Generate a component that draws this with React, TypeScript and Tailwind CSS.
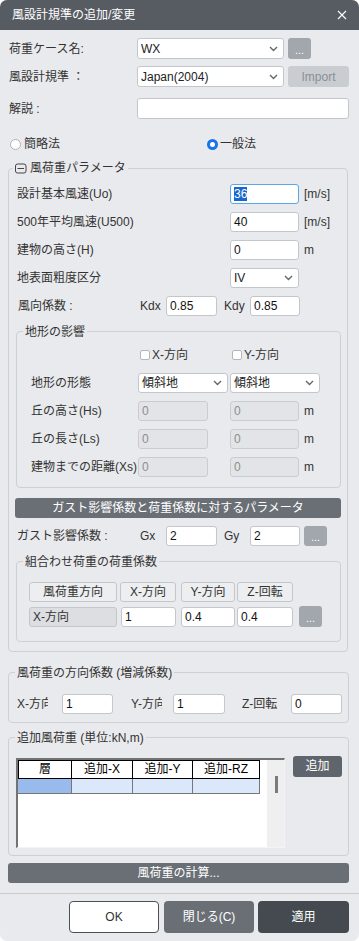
import React from "react";

const Chevron = () => (
  <svg width="9" height="6" viewBox="0 0 9 6" className="shrink-0">
    <polyline points="1,1 4.5,4.5 8,1" fill="none" stroke="#666" strokeWidth="1.4" />
  </svg>
);

function Select({ cls, text }: { cls: string; text: string }) {
  return (
    <div
      className={`flex h-full items-center justify-between rounded-[3px] border border-[#c3c6cb] bg-white pl-[3px] pr-[5px] text-[#222] ${cls}`}
    >
      <span>{text}</span>
      <Chevron />
    </div>
  );
}

function Field({ cls, value, disabled }: { cls: string; value: string; disabled?: boolean }) {
  return (
    <div
      className={`flex h-[20px] items-center rounded-[3px] border pl-[3px] ${
        disabled ? "border-[#c9ccd0] bg-[#e2e4e7] text-[#8d8d8d]" : "border-[#c3c6cb] bg-white text-[#111]"
      } ${cls}`}
    >
      {value}
    </div>
  );
}

function Dots({ cls }: { cls: string }) {
  return (
    <div className={`flex items-end justify-center rounded-[3px] bg-[#a2a7ad] pb-[3px] text-[11px] leading-[11px] text-white ${cls}`}>
      ...
    </div>
  );
}

function Check({ label }: { label: string }) {
  return (
    <div className="flex items-center">
      <div className="h-[10px] w-[10px] rounded-[2px] border border-[#b4b7bb] bg-white" />
      <span className="ml-[2px]">{label}</span>
    </div>
  );
}

const MinusBox = () => (
  <svg width="12" height="11" viewBox="0 0 12 11" className="shrink-0">
    <rect x="0.5" y="1" width="10.5" height="9" rx="2" fill="none" stroke="#444" strokeWidth="1" />
    <line x1="2.5" y1="5.5" x2="9" y2="5.5" stroke="#444" strokeWidth="1" />
  </svg>
);

function HeadBtn({ cls, text }: { cls: string; text: string }) {
  return (
    <div className={`flex h-[20px] items-center justify-center rounded-[3px] border border-[#c3c6cb] bg-[#eceef0] text-[#333] ${cls}`}>
      {text}
    </div>
  );
}

export default function App() {
  return (
    <div className="flex h-[941px] w-[359px] flex-col overflow-hidden rounded-[7px] bg-[#e9eaed] font-['Liberation_Sans','Noto_Sans_CJK_JP',sans-serif] text-[12px] leading-[16px] text-[#333]">
      {/* Title bar */}
      <div className="flex h-[30px] shrink-0 items-center justify-between bg-[#575c63] pl-[12px] pr-[12px] text-white">
        <span>風設計規準の追加/変更</span>
        <svg width="10" height="10" viewBox="0 0 10 10">
          <path d="M1 1L9 9M9 1L1 9" stroke="#fff" strokeWidth="1.1" />
        </svg>
      </div>

      <div className="px-[8px]">
        {/* Row 1 */}
        <div className="mt-[8px] flex h-[21px] items-center">
          <div className="w-[129px] pl-[1px]">荷重ケース名:</div>
          <Select cls="w-[147px]" text="WX" />
          <Dots cls="ml-[4px] h-[21px] w-[23px]" />
        </div>
        {/* Row 2 */}
        <div className="mt-[7px] flex h-[21px] items-center">
          <div className="w-[129px] pl-[1px]">風設計規準 ：</div>
          <Select cls="w-[147px]" text="Japan(2004)" />
          <div className="ml-[4px] flex h-[21px] w-[61px] items-center justify-center rounded-[3px] bg-[#c9cdd2] text-[#8a8f95]">
            Import
          </div>
        </div>
        {/* Row 3 */}
        <div className="mt-[11px] flex h-[21px] items-center">
          <div className="w-[129px] pl-[1px]">解説 :</div>
          <div className="h-[21px] w-[212px] rounded-[3px] border border-[#c3c6cb] bg-white" />
        </div>
        {/* Radios */}
        <div className="mt-[18px] flex h-[14px] items-center pl-[2px]">
          <div className="flex w-[197px] items-center">
            <div className="h-[11px] w-[11px] rounded-full border border-[#b0b3b8] bg-white" />
            <span className="ml-[3px]">簡略法</span>
          </div>
          <div className="flex items-center">
            <div className="h-[11px] w-[11px] rounded-full border-[3px] border-[#1a73e8] bg-white" />
            <span className="ml-[2px]">一般法</span>
          </div>
        </div>

        {/* Outer group */}
        <fieldset className="mt-[9px] w-[340px] rounded-[4px] border border-[#cdd0d4]">
          <legend className="ml-[4px] px-[2px] leading-[16px]">
            <span className="inline-flex items-center">
              <MinusBox />
              <span className="ml-[3px]">風荷重パラメータ</span>
            </span>
          </legend>

          <div className="mt-[6px] flex h-[20px] items-center pl-[8px]">
            <div className="w-[213px]">設計基本風速(Uo)</div>
            <div className="flex h-[20px] w-[69px] items-center rounded-[3px] border border-[#5aa7ea] bg-white pl-[3px]">
              <span className="bg-[#1766d1] leading-[14px] text-white">36</span>
            </div>
            <span className="ml-[5px]">[m/s]</span>
          </div>
          <div className="mt-[8px] flex h-[20px] items-center pl-[8px]">
            <div className="w-[213px]">500年平均風速(U500)</div>
            <Field cls="w-[69px]" value="40" />
            <span className="ml-[5px]">[m/s]</span>
          </div>
          <div className="mt-[8px] flex h-[20px] items-center pl-[8px]">
            <div className="w-[213px]">建物の高さ(H)</div>
            <Field cls="w-[69px]" value="0" />
            <span className="ml-[5px]">m</span>
          </div>
          <div className="mt-[8px] flex h-[20px] items-center pl-[8px]">
            <div className="w-[213px]">地表面粗度区分</div>
            <Select cls="w-[69px]" text="IV" />
          </div>
          <div className="mt-[8px] flex h-[20px] items-center pl-[9px]">
            <div className="w-[122px]">風向係数 :</div>
            <div className="w-[26px]">Kdx</div>
            <Field cls="w-[51px]" value="0.85" />
            <div className="ml-[7px] w-[26px]">Kdy</div>
            <Field cls="w-[50px]" value="0.85" />
          </div>

          {/* Terrain group */}
          <fieldset className="ml-[7px] mt-[8px] w-[325px] rounded-[4px] border border-[#cdd0d4]">
            <legend className="ml-[6px] px-[2px] leading-[16px]">地形の影響</legend>
            <div className="mt-[8px] flex h-[14px] items-center pl-[123px]">
              <div className="w-[92px]">
                <Check label="X-方向" />
              </div>
              <Check label="Y-方向" />
            </div>
            <div className="mt-[11px] flex h-[20px] items-center pl-[14px]">
              <div className="w-[107px]">地形の形態</div>
              <Select cls="w-[90px]" text="傾斜地" />
              <Select cls="ml-[2px] w-[90px]" text="傾斜地" />
            </div>
            <div className="mt-[8px] flex h-[20px] items-center pl-[14px]">
              <div className="w-[107px]">丘の高さ(Hs)</div>
              <Field cls="w-[70px]" value="0" disabled />
              <Field cls="ml-[22px] w-[69px]" value="0" disabled />
              <span className="ml-[5px]">m</span>
            </div>
            <div className="mt-[8px] flex h-[20px] items-center pl-[14px]">
              <div className="w-[107px]">丘の長さ(Ls)</div>
              <Field cls="w-[70px]" value="0" disabled />
              <Field cls="ml-[22px] w-[69px]" value="0" disabled />
              <span className="ml-[5px]">m</span>
            </div>
            <div className="mb-[10px] mt-[8px] flex h-[20px] items-center pl-[14px]">
              <div className="w-[107px] whitespace-nowrap">建物までの距離(Xs)</div>
              <Field cls="w-[70px]" value="0" disabled />
              <Field cls="ml-[22px] w-[69px]" value="0" disabled />
              <span className="ml-[5px]">m</span>
            </div>
          </fieldset>

          {/* Gust bar */}
          <div className="ml-[6px] mt-[10px] flex h-[20px] w-[326px] items-center justify-center rounded-[3px] bg-[#6a6f76] text-white">
            ガスト影響係数と荷重係数に対するパラメータ
          </div>
          <div className="mt-[8px] flex h-[20px] items-center pl-[8px]">
            <div className="w-[123px]">ガスト影響係数 :</div>
            <div className="w-[26px]">Gx</div>
            <Field cls="w-[51px]" value="2" />
            <div className="ml-[7px] w-[26px]">Gy</div>
            <Field cls="w-[50px]" value="2" />
            <Dots cls="ml-[4px] h-[20px] w-[23px]" />
          </div>

          {/* Combination group */}
          <fieldset className="mb-[9px] ml-[7px] mt-[8px] w-[325px] rounded-[4px] border border-[#cdd0d4]">
            <legend className="ml-[6px] px-[2px] leading-[16px]">組合わせ荷重の荷重係数</legend>
            <div className="mt-[12px] flex h-[20px] items-center pl-[12px]">
              <HeadBtn cls="w-[88px]" text="風荷重方向" />
              <HeadBtn cls="ml-[3px] w-[56px]" text="X-方向" />
              <HeadBtn cls="ml-[5px] w-[54px]" text="Y-方向" />
              <HeadBtn cls="ml-[2px] w-[56px]" text="Z-回転" />
            </div>
            <div className="mb-[14px] mt-[5px] flex h-[20px] items-center pl-[12px]">
              <div className="flex h-[20px] w-[88px] items-center rounded-[3px] border border-[#c3c6cb] bg-[#dcdee2] pl-[3px]">
                X-方向
              </div>
              <Field cls="ml-[4px] w-[55px]" value="1" />
              <Field cls="ml-[5px] w-[54px]" value="0.4" />
              <Field cls="ml-[2px] w-[56px]" value="0.4" />
              <Dots cls="ml-[6px] h-[21px] w-[23px]" />
            </div>
          </fieldset>
        </fieldset>

        {/* Direction coefficients */}
        <fieldset className="mt-[13px] w-[341px] rounded-[4px] border border-[#cdd0d4]">
          <legend className="ml-[6px] px-[2px] leading-[16px]">風荷重の方向係数 (増減係数)</legend>
          <div className="mb-[8px] mt-[13px] flex h-[20px] items-center pl-[8px]">
            <div className="w-[31px] overflow-hidden whitespace-nowrap">X-方向</div>
            <Field cls="ml-[14px] w-[51px]" value="1" />
            <div className="ml-[18px] w-[31px] overflow-hidden whitespace-nowrap">Y-方向</div>
            <Field cls="ml-[11px] w-[52px]" value="1" />
            <div className="ml-[17px] w-[49px]">Z-回転</div>
            <Field cls="w-[51px]" value="0" />
          </div>
        </fieldset>

        {/* Additional wind load */}
        <fieldset className="mt-[7px] w-[341px] rounded-[4px] border border-[#cdd0d4]">
          <legend className="ml-[6px] px-[2px] leading-[16px]">追加風荷重 (単位:kN,m)</legend>
          <div className="mb-[7px] mt-[10px] flex items-start">
            <div className="ml-[7px] mt-[2px] flex h-[90px] w-[269px] border-b border-l-2 border-r border-t-2 border-b-[#f4f4f4] border-l-[#737373] border-r-[#f4f4f4] border-t-[#737373] bg-white">
              <div className="w-[249px]">
                <div className="flex h-[19px] text-black">
                  <div className="flex w-[54px] items-center justify-center border border-black">層</div>
                  <div className="flex w-[61px] items-center justify-center border border-l-0 border-black">追加-X</div>
                  <div className="flex w-[60px] items-center justify-center border border-l-0 border-black">追加-Y</div>
                  <div className="flex w-[67px] items-center justify-center border border-l-0 border-black">追加-RZ</div>
                </div>
                <div className="flex h-[15px]">
                  <div className="w-[54px] border-b border-r border-[#777] bg-[#98baec]" />
                  <div className="w-[61px] border-b border-r border-[#777] bg-[#dbe7fa]" />
                  <div className="w-[60px] border-b border-r border-[#777] bg-[#dbe7fa]" />
                  <div className="w-[67px] border-b border-r border-[#777] bg-[#dbe7fa]" />
                </div>
              </div>
              <div className="ml-auto w-[17px] bg-[#efefef] pl-[8px] pt-[16px]">
                <div className="h-[17px] w-[3px] bg-[#7a7a7a]" />
              </div>
            </div>
            <div className="ml-[8px] flex h-[21px] w-[49px] items-center justify-center rounded-[3px] bg-[#5f656c] text-white">
              追加
            </div>
          </div>
        </fieldset>

        {/* Calc bar */}
        <div className="mt-[7px] flex h-[20px] w-[341px] items-center justify-center rounded-[3px] bg-[#6a6f76] text-white">
          風荷重の計算...
        </div>
      </div>

      <div className="mt-[10px] h-px w-full bg-[#c9cbcf]" />

      <div className="mt-[7px] flex h-[32px] pl-[69px]">
        <div className="flex w-[90px] items-center justify-center rounded-[4px] border border-[#4b5057] bg-white text-[#333]">
          OK
        </div>
        <div className="ml-[5px] flex w-[90px] items-center justify-center rounded-[4px] bg-[#6a6f76] text-white">
          閉じる(C)
        </div>
        <div className="ml-[4px] flex w-[91px] items-center justify-center rounded-[4px] bg-[#454a51] text-white">
          適用
        </div>
      </div>
    </div>
  );
}
